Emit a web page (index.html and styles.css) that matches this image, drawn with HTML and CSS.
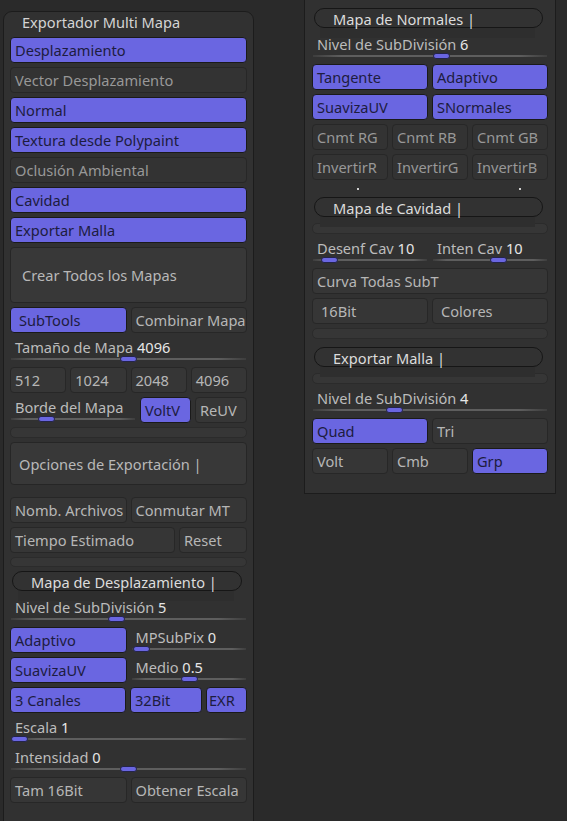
FILE: index.html
```html
<!DOCTYPE html>
<html lang="es">
<head>
<meta charset="utf-8">
<title>Exportador Multi Mapa</title>
<link rel="stylesheet" href="styles.css">
</head>
<body>
<div class="panel left">
  <div class="title">Exportador Multi Mapa</div>
  <div class="col">
    <div class="btn on">Desplazamiento</div>
    <div class="btn dim">Vector Desplazamiento</div>
    <div class="btn on">Normal</div>
    <div class="btn on">Textura desde Polypaint</div>
    <div class="btn dim">Oclusión Ambiental</div>
    <div class="btn on">Cavidad</div>
    <div class="btn on">Exportar Malla</div>
    <div class="box big">Crear Todos los Mapas</div>
    <div class="row halves">
      <div class="btn on pad8">SubTools</div>
      <div class="btn">Combinar Mapa</div>
    </div>
    <div class="slider"><div class="slabel">Tamaño de Mapa <b>4096</b></div><div class="track"><span class="knob" style="left:110px"></span></div></div>
    <div class="row quarters">
      <div class="btn">512</div>
      <div class="btn">1024</div>
      <div class="btn">2048</div>
      <div class="btn">4096</div>
    </div>
    <div class="row borde">
      <div class="slider"><div class="slabel">Borde del Mapa</div><div class="track"><span class="knob" style="left:28px"></span></div></div>
      <div class="btn on">VoltV</div>
      <div class="btn">ReUV</div>
    </div>
    <div class="bar"></div>
    <div class="box mid">Opciones de Exportación |</div>
    <div class="row halves sep">
      <div class="btn">Nomb. Archivos</div>
      <div class="btn">Conmutar MT</div>
    </div>
    <div class="row tiempo">
      <div class="btn">Tiempo Estimado</div>
      <div class="btn">Reset</div>
    </div>
    <div class="bar thin"></div>
    <div class="pillwrap"><div class="pill">Mapa de Desplazamiento |</div></div>
    <div class="slider"><div class="slabel">Nivel de SubDivisión <b>5</b></div><div class="track"><span class="knob" style="left:98px"></span></div></div>
    <div class="row halves">
      <div class="btn on">Adaptivo</div>
      <div class="slider"><div class="slabel">MPSubPix <b>0</b></div><div class="track"><span class="knob" style="left:2px"></span></div></div>
    </div>
    <div class="row halves">
      <div class="btn on">SuavizaUV</div>
      <div class="slider"><div class="slabel">Medio <b>0.5</b></div><div class="track"><span class="knob" style="left:50px"></span></div></div>
    </div>
    <div class="row canales">
      <div class="btn on">3 Canales</div>
      <div class="btn on">32Bit</div>
      <div class="btn on pad3">EXR</div>
    </div>
    <div class="slider"><div class="slabel">Escala <b>1</b></div><div class="track"><span class="knob" style="left:1px"></span></div></div>
    <div class="slider"><div class="slabel">Intensidad <b>0</b></div><div class="track"><span class="knob" style="left:110px"></span></div></div>
    <div class="row halves">
      <div class="btn">Tam 16Bit</div>
      <div class="btn">Obtener Escala</div>
    </div>
  </div>
</div>

<div class="panel right">
  <div class="col">
    <div class="pillwrap"><div class="pill">Mapa de Normales |</div></div>
    <div class="slider"><div class="slabel">Nivel de SubDivisión <b>6</b></div><div class="track"><span class="knob" style="left:121px"></span></div></div>
    <div class="row halves">
      <div class="btn on">Tangente</div>
      <div class="btn on">Adaptivo</div>
    </div>
    <div class="row halves">
      <div class="btn on">SuavizaUV</div>
      <div class="btn on">SNormales</div>
    </div>
    <div class="row thirds">
      <div class="btn dim">Cnmt RG</div>
      <div class="btn dim">Cnmt RB</div>
      <div class="btn dim">Cnmt GB</div>
    </div>
    <div class="row thirds">
      <div class="btn dim">InvertirR</div>
      <div class="btn dim">InvertirG</div>
      <div class="btn dim">InvertirB</div>
    </div>
    <div class="dots"><span class="dot"></span><span class="dot"></span></div>
    <div class="pillwrap"><div class="pill">Mapa de Cavidad |</div></div>
    <div class="bar"></div>
    <div class="row halves">
      <div class="slider"><div class="slabel">Desenf Cav <b>10</b></div><div class="track"><span class="knob" style="left:9px"></span></div></div>
      <div class="slider"><div class="slabel">Inten Cav <b>10</b></div><div class="track"><span class="knob" style="left:58px"></span></div></div>
    </div>
    <div class="btn">Curva Todas SubT</div>
    <div class="row halves">
      <div class="btn pad8">16Bit</div>
      <div class="btn pad8">Colores</div>
    </div>
    <div class="bar"></div>
    <div class="pillwrap sep4"><div class="pill">Exportar Malla |</div></div>
    <div class="bar"></div>
    <div class="slider"><div class="slabel">Nivel de SubDivisión <b>4</b></div><div class="track"><span class="knob" style="left:74px"></span></div></div>
    <div class="row halves">
      <div class="btn on">Quad</div>
      <div class="btn">Tri</div>
    </div>
    <div class="row thirds">
      <div class="btn">Volt</div>
      <div class="btn">Cmb</div>
      <div class="btn on">Grp</div>
    </div>
  </div>
</div>
</body>
</html>
```

FILE: styles.css
```css
html, body {
  margin: 0;
  padding: 0;
}
body {
  width: 567px;
  height: 821px;
  overflow: hidden;
  background: #2a2a2a;
  font-family: "Noto Sans", "Open Sans", sans-serif;
  font-size: 14.6px;
  display: flex;
  align-items: flex-start;
}
.panel {
  box-sizing: border-box;
  background: #313131;
  border: 1px solid #1c1c1c;
}
.left {
  width: 251px;
  margin-left: 3px;
  margin-top: 11px;
  height: 820px;
  border-radius: 9px 9px 0 0;
  padding: 0 6px;
}
.right {
  width: 252px;
  margin-left: 50px;
  border-top: none;
  padding: 8px 7px 19px 7px;
}
.title {
  height: 25px;
  line-height: 20px;
  padding-left: 12px;
  color: #d4d4d4;
}
.col {
  display: flex;
  flex-direction: column;
  gap: 4px;
}
.row {
  display: grid;
  gap: 4px;
}
.halves { grid-template-columns: 1fr 1fr; }
.thirds { grid-template-columns: 1fr 1fr 1fr; }
.quarters { grid-template-columns: 1fr 1fr 1fr 1fr; }
.borde { grid-template-columns: 1fr 51px 52px; }
.tiempo { grid-template-columns: 1fr 68px; }
.canales { grid-template-columns: 116px 72px 1fr; }
.sep { margin-top: 8px; }
.sep4 { margin-top: 4px; }

.btn {
  box-sizing: border-box;
  height: 26px;
  border: 1px solid #272727;
  border-radius: 4px;
  background: #363636;
  color: #b6b6b6;
  display: flex;
  align-items: center;
  padding-left: 4px;
  white-space: nowrap;
  overflow: hidden;
}
.btn.dim {
  background: #333333;
  color: #989898;
}
.btn.on {
  background: #6a66e1;
  border-color: #1a1a1a;
  color: #1d1c40;
}
.btn.pad8 { padding-left: 8px; }
.btn.pad3 { padding-left: 2px; }

.box {
  box-sizing: border-box;
  border: 1px solid #262626;
  border-radius: 4px;
  background: #383838;
  color: #b8b8b8;
  display: flex;
  align-items: center;
}
.box.big { height: 56px; padding-left: 11px; }
.box.mid { height: 43px; padding-left: 8px; }

.bar {
  box-sizing: border-box;
  height: 11px;
  border: 1px solid #2b2b2b;
  border-radius: 5px;
  background: #363636;
}
.bar.thin { height: 10px; }

.pillwrap {
  position: relative;
  height: 22px;
}
.pillwrap::after {
  content: "";
  position: absolute;
  left: 8px;
  right: 13px;
  top: 20px;
  height: 10px;
  background: #2e2e2e;
}
.pill {
  position: relative;
  z-index: 1;
  box-sizing: border-box;
  height: 20px;
  margin: 0 5px 0 2px;
  border: 1px solid #161616;
  border-radius: 10px;
  background: #323232;
  padding-left: 18px;
  padding-top: 1px;
  line-height: 19px;
  color: #dcdcdc;
  white-space: nowrap;
}

.slider {
  position: relative;
  height: 26px;
}
.slabel {
  height: 19px;
  line-height: 20px;
  padding-left: 5px;
  color: #bcbcbc;
  white-space: nowrap;
}
.slabel b {
  font-weight: normal;
  color: #e6e6e6;
}
.track {
  position: relative;
  height: 7px;
}
.track::before {
  content: "";
  position: absolute;
  left: 1px;
  right: 1px;
  top: 2px;
  height: 2px;
  background: linear-gradient(90deg, rgba(110,110,110,0.2), #5e5e5e 12%, #5e5e5e 88%, rgba(110,110,110,0.2));
}
.knob {
  position: absolute;
  top: 0;
  width: 17px;
  height: 6px;
  box-sizing: border-box;
  border-radius: 3px;
  background: #6a66e1;
  border: 1px solid #24244a;
}

.dots {
  height: 9px;
  display: flex;
  align-items: center;
  gap: 160px;
  padding-left: 45px;
}
.dot {
  width: 2px;
  height: 2px;
  background: #d0d0d0;
}
```
